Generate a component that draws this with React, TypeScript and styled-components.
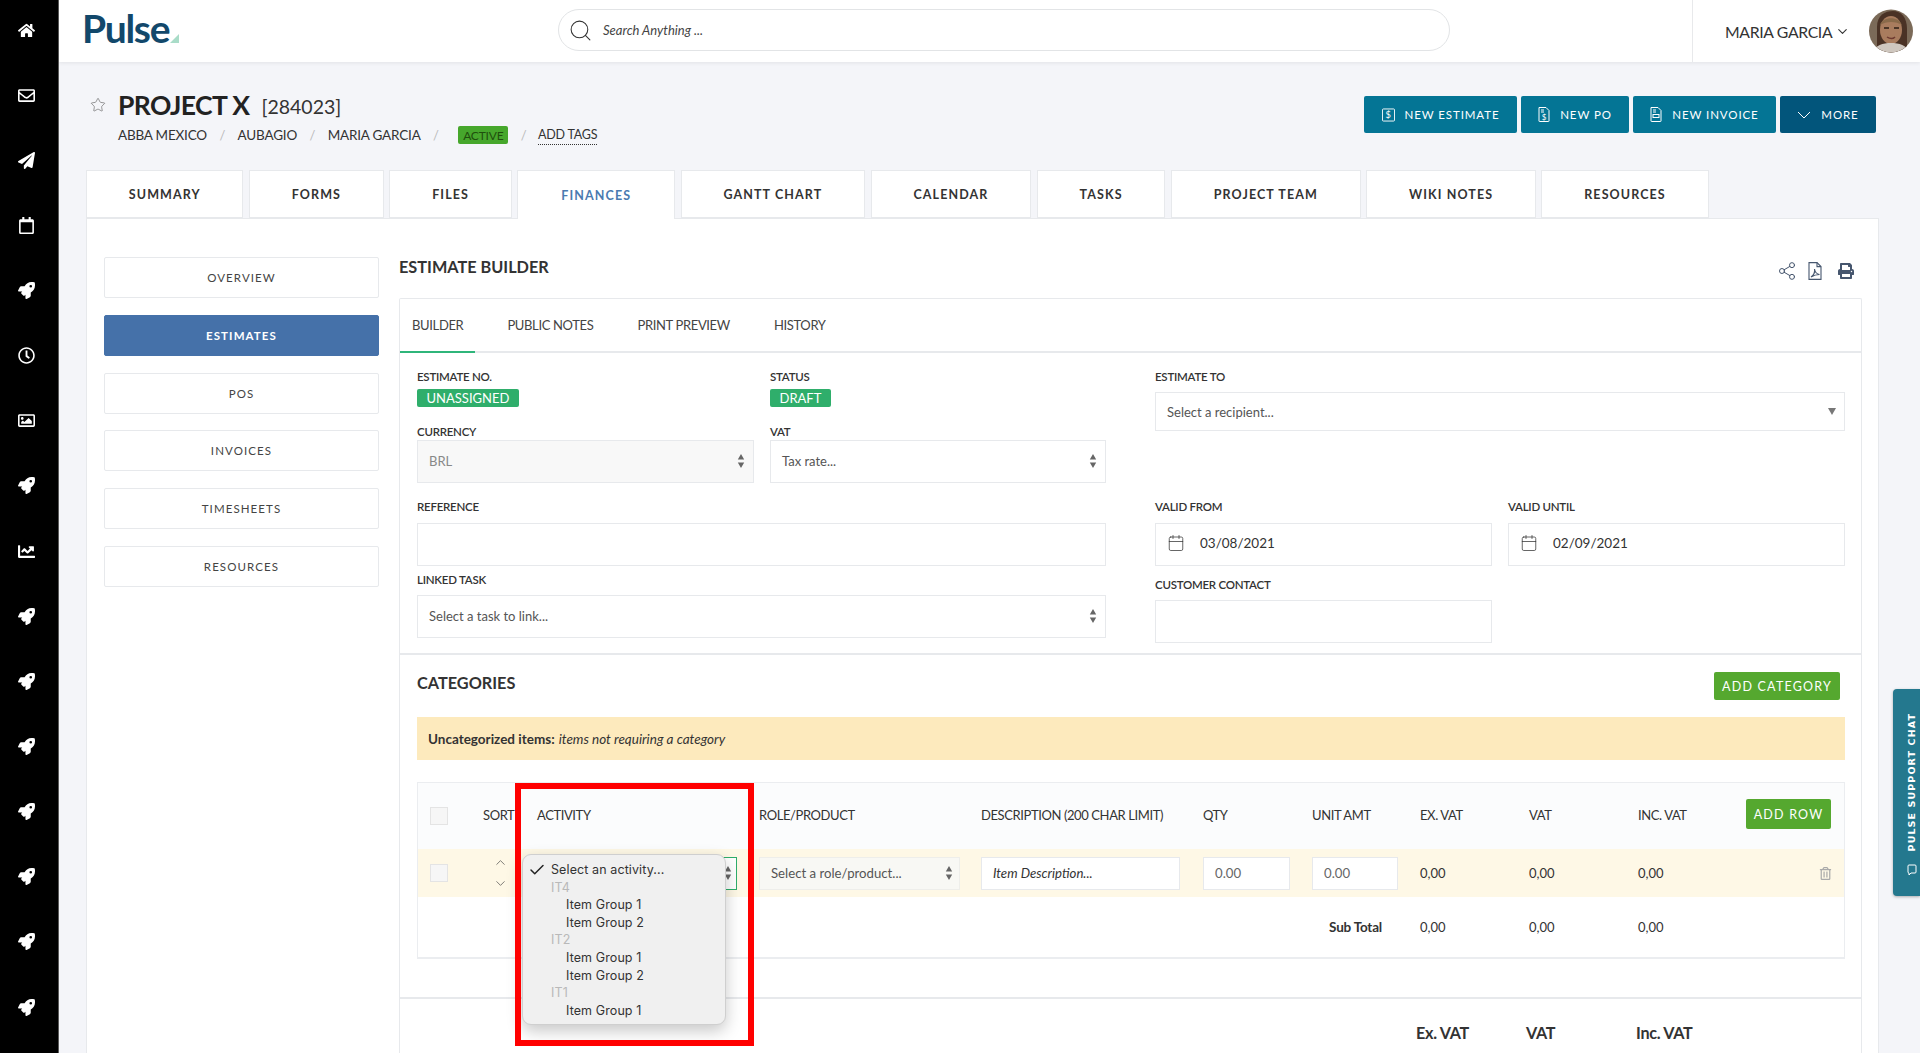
import React from "react";
import styled, { createGlobalStyle } from "styled-components";
import { ChevronDown, ChevronUp, Search, Star, Share2, Calendar, Check } from "lucide-react";
import { FaHome, FaRegEnvelope, FaPaperPlane, FaRegCalendar, FaRocket, FaRegClock, FaRegImage, FaChartLine, FaPrint, FaRegTrashAlt } from "react-icons/fa";

const Global = createGlobalStyle`
  html, body { margin: 0; padding: 0; background: #f4f5f9; }
  * { box-sizing: border-box; }
  body { font-family: Lato, "Liberation Sans", sans-serif; color: #333; }
`;

const GRID = "54px 54px 222px 222px 222px 109px 108px 109px 109px 108px 1fr";
const BORDER = "#e7e9ec";

const Shell = styled.div`
  position: relative;
  display: flex;
  width: 1920px;
  height: 1053px;
  overflow: hidden;
`;
const Sidebar = styled.nav`
  flex: 0 0 59px;
  background: #000;
  border-right: 1px solid #5a5a5a;
  padding-top: 22px;
  display: flex;
  flex-direction: column;
  align-items: center;
  gap: 49.15px;
  color: #fff;
`;
const SideIcon = styled.span`
  display: flex;
  align-items: center;
  justify-content: center;
  height: 16px;
  width: 18px;
  margin-right: 5px;
  font-size: 17px;
`;
const Main = styled.main`
  flex: 1;
  min-width: 0;
  display: flex;
  flex-direction: column;
`;
const Header = styled.header`
  flex: 0 0 62px;
  background: #fff;
  box-shadow: 0 1px 4px rgba(0, 0, 0, 0.08);
  display: flex;
  align-items: center;
  position: relative;
  padding-left: 24px;
`;
const Logo = styled.div`
  width: 100px;
  display: flex;
  align-items: flex-end;
  color: #12486b;
  font-size: 39px;
  font-weight: 700;
  letter-spacing: -1.3px;
  line-height: 46px;
  height: 46px;
  margin: -6px 0 0 -1px;
`;
const LogoMark = styled.svg`
  margin: 0 0 8px 1px;
`;
const SearchBox = styled.div`
  margin-left: 376px;
  width: 892px;
  height: 42px;
  border: 1px solid #e2e4e6;
  border-radius: 21px;
  display: flex;
  align-items: center;
  padding-left: 9px;
  gap: 10px;
  font-size: 13px;
  font-style: italic;
  color: #444;
  background: #fff;
  margin-top: -2px;
`;
const UserArea = styled.div`
  margin-left: auto;
  width: 228px;
  height: 62px;
  border-left: 1px solid #e8e9eb;
  display: flex;
  align-items: center;
  padding-left: 32px;
  font-size: 15.8px;
  color: #333;
  letter-spacing: -0.35px;
`;
const UserChevron = styled(ChevronDown)`
  margin-left: 3px;
`;
const Avatar = styled.svg`
  margin-left: 19px;
  flex: 0 0 44px;
`;
const Head = styled.section`
  flex: 0 0 108px;
  display: flex;
  justify-content: space-between;
  padding: 0 44px 0 31px;
`;
const TitleCol = styled.div`
  padding-top: 27px;
`;
const TitleRow = styled.div`
  display: flex;
  align-items: center;
  gap: 12px;
  height: 32px;
  color: #666;
`;
const Title = styled.h1`
  margin: 0;
  font-size: 26.5px;
  line-height: 32px;
  font-weight: 700;
  color: #222;
  letter-spacing: -0.6px;
`;
const Code = styled.span`
  font-size: 19.5px;
  color: #333;
  margin-top: 3px;
`;
const Crumbs = styled.div`
  display: flex;
  align-items: center;
  gap: 12.5px;
  height: 20px;
  margin: 4px 0 0 28px;
  font-size: 13.5px;
  letter-spacing: -0.2px;
  color: #333;
`;
const Slash = styled.span`
  color: #bbb;
  font-size: 13px;
`;
const Pill = styled.span<{ $bg: string }>`
  display: inline-flex;
  align-items: center;
  justify-content: center;
  background: ${(p) => p.$bg};
  border-radius: 2px;
  height: 18px;
  padding: 0 9.5px;
  font-size: 13px;
  color: #fff;
`;
const ActivePill = styled(Pill)`
  width: 50px;
  padding: 0;
  font-size: 12px;
  color: #1f4f0d;
  margin-left: 7px;
`;
const AddTags = styled.span`
  border-bottom: 1px dotted #333;
  padding-bottom: 2px;
  margin: 2px 0 0 -1px;
  font-size: 12.5px;
`;
const Actions = styled.div`
  display: flex;
  gap: 4px;
  padding-top: 34px;
`;
const ActionBtn = styled.button<{ $dark?: boolean; $w: number }>`
  width: ${(p) => p.$w}px;
  height: 37px;
  border: 0;
  border-radius: 2px;
  background: ${(p) => (p.$dark ? "#02557b" : "#047595")};
  color: #fff;
  font-family: inherit;
  font-size: 11.5px;
  letter-spacing: 0.9px;
  display: flex;
  align-items: center;
  justify-content: center;
  gap: 10px;
  padding: 0;
`;
const Tabs = styled.div`
  display: flex;
  gap: 5.5px;
  margin-left: 27px;
  height: 48px;
  position: relative;
  z-index: 1;
`;
const Tab = styled.div<{ $active?: boolean }>`
  height: ${(p) => (p.$active ? "49px" : "48px")};
  padding: 0 ${(p) => (p.$active ? 43 : 41.8)}px;
  background: #fff;
  border: 1px solid ${BORDER};
  border-bottom: ${(p) => (p.$active ? "0" : `1px solid ${BORDER}`)};
  display: flex;
  align-items: center;
  font-size: 12.5px;
  font-weight: 700;
  letter-spacing: 1.1px;
  color: ${(p) => (p.$active ? "#4a7ab0" : "#333")};
`;
const Panel = styled.div`
  flex: 1;
  margin: 0 41px 0 27px;
  background: #fff;
  border: 1px solid ${BORDER};
  border-bottom: 0;
  display: flex;
  padding-left: 17px;
  min-height: 0;
`;
const SideNav = styled.div`
  flex: 0 0 275px;
  padding-top: 38px;
  display: flex;
  flex-direction: column;
  gap: 16.8px;
`;
const NavBtn = styled.div<{ $active?: boolean }>`
  height: 41px;
  background: ${(p) => (p.$active ? "#4571a9" : "#fff")};
  border: 1.5px solid ${(p) => (p.$active ? "#4571a9" : BORDER)};
  border-radius: 2px;
  color: ${(p) => (p.$active ? "#fff" : "#444")};
  font-size: 11.5px;
  letter-spacing: 1.1px;
  display: flex;
  align-items: center;
  justify-content: center;
  font-weight: ${(p) => (p.$active ? 700 : 400)};
`;
const Work = styled.div`
  flex: 1;
  min-width: 0;
  margin: 0 16px 0 20px;
  display: flex;
  flex-direction: column;
`;
const WorkHead = styled.div`
  flex: 0 0 79px;
  padding-top: 38px;
  display: flex;
  justify-content: space-between;
`;
const H2 = styled.h2`
  margin: 0;
  font-size: 16.3px;
  line-height: 20px;
  font-weight: 700;
  color: #333;
`;
const CatTitle = styled(H2)`
  margin-top: -6px;
`;
const Tools = styled.div`
  display: flex;
  align-items: center;
  gap: 11px;
  color: #46566e;
  padding: 4px 8px 0 0;
  height: 24px;
`;
const PdfSvg = styled.svg`
  margin-right: 5px;
`;
const Card = styled.div`
  flex: 1;
  border: 1.5px solid ${BORDER};
  border-bottom: 0;
  border-radius: 2px 2px 0 0;
  min-height: 0;
`;
const CardTabs = styled.div`
  height: 54px;
  display: flex;
  gap: 20px;
  border-bottom: 2px solid ${BORDER};
`;
const CardTab = styled.div<{ $active?: boolean }>`
  padding: 0 12px;
  height: 54px;
  display: flex;
  align-items: center;
  font-size: 13px;
  letter-spacing: -0.35px;
  color: #444;
  border-bottom: 2px solid ${(p) => (p.$active ? "#2fb57a" : "transparent")};
`;
const Form = styled.div`
  height: 302px;
  padding: 17px 16px 0 17px;
  display: grid;
  grid-template-columns: 689px 690px;
  gap: 49px;
  border-bottom: 2px solid ${BORDER};
`;
const Col = styled.div`
  display: flex;
  flex-direction: column;
  align-items: stretch;
`;
const Two = styled.div`
  display: grid;
  grid-template-columns: 337px 336px;
  gap: 16px;
`;
const DateGrid = styled(Two)`
  grid-template-columns: 337px 337px;
`;
const Label = styled.label<{ $mt?: number; $mb?: number }>`
  display: block;
  height: 14px;
  line-height: 14px;
  font-size: 11.5px;
  font-weight: 600;
  color: #333;
  letter-spacing: -0.25px;
  margin-top: ${(p) => p.$mt ?? 0}px;
  margin-bottom: ${(p) => p.$mb ?? 0}px;
`;
const BadgeWrap = styled.div`
  display: flex;
  margin-top: 5px;
  height: 18px;
`;
const Field = styled.div<{ $h?: number; $disabled?: boolean }>`
  height: ${(p) => p.$h ?? 43}px;
  border: 1.5px solid ${BORDER};
  background: ${(p) => (p.$disabled ? "#f8f8f8" : "#fff")};
  display: flex;
  align-items: center;
  justify-content: space-between;
  padding: 0 8px 2px 11px;
  font-size: 13px;
  color: ${(p) => (p.$disabled ? "#888" : "#555")};
`;
const RecipientField = styled(Field)`
  padding-bottom: 0;
`;
const DateField = styled(Field)`
  justify-content: flex-start;
  gap: 15px;
  padding-bottom: 3px;
  color: #333;
  font-size: 13.5px;
`;
const ShortField = styled(Field)`
  width: 337px;
`;
const Categories = styled.div`
  padding: 17px 16px 38px 17px;
  border-bottom: 2px solid ${BORDER};
`;
const CatHead = styled.div`
  display: flex;
  justify-content: space-between;
  align-items: center;
  height: 28px;
  padding-right: 5px;
`;
const GreenBtn = styled.button<{ $w: number; $h: number }>`
  width: ${(p) => p.$w}px;
  height: ${(p) => p.$h}px;
  background: #55a82f;
  border: 0;
  border-radius: 2px;
  color: #fff;
  font-family: inherit;
  font-size: 12.5px;
  letter-spacing: 1.2px;
  padding: 0;
`;
const Banner = styled.div`
  margin-top: 17px;
  height: 43px;
  background: #fdeabd;
  display: flex;
  align-items: center;
  padding-left: 11px;
  font-size: 13.5px;
  color: #333;
  gap: 4px;
  b { font-weight: 700; }
  i { font-style: italic; }
`;
const Table = styled.div`
  margin-top: 22px;
  height: 177px;
  border: 1px solid #ebedf0;
  border-bottom-width: 2px;
`;
const Row = styled.div<{ $h: number; $bg: string }>`
  height: ${(p) => p.$h}px;
  background: ${(p) => p.$bg};
  display: grid;
  grid-template-columns: ${GRID};
  align-items: center;
  padding-left: 11px;
  font-size: 13px;
  color: #333;
`;
const Box = styled.span`
  display: block;
  width: 18px;
  height: 18px;
  margin-left: 1px;
  background: #f6f6f6;
  border: 1.5px solid #e4e4e4;
`;
const Sorter = styled.div`
  display: flex;
  flex-direction: column;
  align-items: center;
  width: 34px;
  color: #444;
  gap: 6px;
`;
const Cell = styled.div`
  font-size: 13px;
`;
const HeadCell = styled(Cell)`
  letter-spacing: -0.4px;
  color: #333;
  margin-top: -2px;
`;
const RowField = styled.div<{ $w: number; $tone: string; $line: string }>`
  width: ${(p) => p.$w}px;
  height: 33px;
  background: ${(p) => p.$tone};
  border: 1.5px solid ${(p) => p.$line};
  display: flex;
  align-items: center;
  justify-content: space-between;
  padding: 0 6px 0 11px;
  font-size: 13.2px;
  color: #555;
`;
const ActivityField = styled(RowField)`
  justify-content: flex-end;
  padding-right: 4px;
`;
const DescField = styled(RowField)`
  font-style: italic;
  color: #333;
`;
const NumField = styled(RowField)`
  color: #666;
`;
const TrashCell = styled.div`
  display: flex;
  justify-content: flex-end;
  padding-right: 12px;
  color: #aaa;
  font-size: 13px;
`;
const SubTotal = styled(Cell)`
  text-align: right;
  font-weight: 700;
  padding-right: 38px;
  letter-spacing: -0.2px;
  font-size: 13.5px;
`;
const BtnCell = styled.div`
  margin-top: -4px;
`;
const Totals = styled.div`
  display: grid;
  grid-template-columns: 110px 110px auto;
  padding: 24px 0 0 1016px;
  font-size: 16.2px;
  font-weight: 700;
  color: #333;
  letter-spacing: -0.3px;
`;
const RedFrame = styled.div`
  position: absolute;
  left: 515px;
  top: 783px;
  width: 239px;
  height: 263px;
  border: 6px solid #ff0000;
  pointer-events: none;
`;
const Popup = styled.ul`
  position: absolute;
  left: 522px;
  top: 854px;
  width: 204px;
  height: 171px;
  margin: 0;
  padding: 6px 0 0;
  list-style: none;
  background: #f0f0f0;
  border: 1px solid #cfcfcf;
  border-radius: 9px;
  box-shadow: 0 6px 16px rgba(0, 0, 0, 0.22);
  font-family: Inter, "Noto Sans", sans-serif;
  font-size: 12.5px;
  letter-spacing: 0.1px;
`;
const PopItem = styled.li<{ $kind: "item" | "group" | "first" }>`
  position: relative;
  height: 17.6px;
  line-height: 17.6px;
  padding-left: ${(p) => (p.$kind === "item" ? 43 : 28)}px;
  color: ${(p) => (p.$kind === "group" ? "#b9b9b9" : "#333")};
`;
const Tick = styled.span`
  position: absolute;
  left: 5px;
  top: 0;
  color: #222;
  display: flex;
`;
const Chat = styled.aside`
  position: absolute;
  right: 0;
  top: 689px;
  width: 27px;
  height: 207px;
  background: #24788e;
  border-radius: 4px 0 0 4px;
  box-shadow: 0 1px 3px rgba(0, 0, 0, 0.3);
  color: #fff;
  display: flex;
  align-items: center;
  justify-content: flex-end;
  flex-direction: column;
  padding: 0 0 20px 10px;
  gap: 13px;
`;
const ChatText = styled.span`
  writing-mode: vertical-rl;
  transform: rotate(180deg);
  font-family: "DejaVu Sans", sans-serif;
  font-weight: 700;
  font-size: 9.5px;
  letter-spacing: 1.1px;
  white-space: nowrap;
`;

const Arrows = () => (
  <svg width="8" height="14" viewBox="0 0 8 14"><path d="M4 0l3.200 5.500H.8zM4 14L.8 8.500h6.400z" fill="#666" /></svg>
);
const DocIcon = ({ kind }: { kind: "box" | "po" | "inv" }) =>
  kind === "box" ? (
    <svg width="13" height="14" viewBox="0 0 14 14" fill="none" stroke="#fff" strokeWidth="1"><rect x=".5" y=".5" width="13" height="13" rx="1" /><text x="7" y="10.500" fontSize="10" fill="#fff" stroke="none" textAnchor="middle" fontFamily="Lato">$</text></svg>
  ) : (
    <svg width="12" height="15" viewBox="0 0 12 15" fill="none" stroke="#fff" strokeWidth="1">
      <path d="M1 .5h7l3 3V14a.5.5 0 0 1-.5.5h-9A.5.5 0 0 1 1 14z" />
      <path d="M3 3h3M3 5h3" />
      {kind === "po" ? <text x="6.500" y="12.500" fontSize="8" fill="#fff" stroke="none" textAnchor="middle" fontFamily="Lato">$</text> : <rect x="3" y="7.500" width="6" height="3" />}
    </svg>
  );
const PdfIcon = () => (
  <PdfSvg width="14" height="18" viewBox="0 0 14 18" fill="none" stroke="#46566e" strokeWidth="1.1"><path d="M1 .6h8l4 4V17.400H1z" /><path d="M9 .6v4h4" /><path d="M3 15c3-2 4-5 3.500-8 .5 3 2 5 5 5.500-3 0-6 1-8.500 2.500z" /></PdfSvg>
);
const FaceAvatar = () => (
  <Avatar width="44" height="44" viewBox="0 0 44 44">
    <defs><clipPath id="av"><ellipse cx="22" cy="22" rx="22" ry="21.500" /></clipPath></defs>
    <g clipPath="url(#av)">
      <rect width="44" height="44" fill="#7b6a58" />
      <path d="M8 44V18C8 6 16 2 24 2s14 6 14 18v24z" fill="#4a3225" />
      <ellipse cx="22" cy="21" rx="11" ry="14" fill="#a97c5e" />
      <path d="M11 16c2-8 18-10 22 0-6-4-16-4-22 0z" fill="#8a6a4a" />
      <path d="M15 19h5M25 19h5" stroke="#2e1e16" strokeWidth="1.500" />
      <path d="M18 28c3 2 6 2 8 0" stroke="#6e3a30" strokeWidth="1.500" fill="none" />
      <path d="M4 44c2-8 10-10 18-10s16 2 18 10z" fill="#cfc7bf" />
    </g>
  </Avatar>
);

const sideIcons = [FaHome, FaRegEnvelope, FaPaperPlane, FaRegCalendar, FaRocket, FaRegClock, FaRegImage, FaRocket, FaChartLine, FaRocket, FaRocket, FaRocket, FaRocket, FaRocket, FaRocket, FaRocket];
const tabs = ["SUMMARY", "FORMS", "FILES", "FINANCES", "GANTT CHART", "CALENDAR", "TASKS", "PROJECT TEAM", "WIKI NOTES", "RESOURCES"];
const nav = ["OVERVIEW", "ESTIMATES", "POS", "INVOICES", "TIMESHEETS", "RESOURCES"];
const cardTabs = ["BUILDER", "PUBLIC NOTES", "PRINT PREVIEW", "HISTORY"];
const tableHead = ["SORT", "ACTIVITY", "ROLE/PRODUCT", "DESCRIPTION (200 CHAR LIMIT)", "QTY", "UNIT AMT", "EX. VAT", "VAT", "INC. VAT"];
const options: { t: string; k: "item" | "group" | "first" }[] = [
  { t: "Select an activity...", k: "first" },
  { t: "IT4", k: "group" },
  { t: "Item Group 1", k: "item" },
  { t: "Item Group 2", k: "item" },
  { t: "IT2", k: "group" },
  { t: "Item Group 1", k: "item" },
  { t: "Item Group 2", k: "item" },
  { t: "IT1", k: "group" },
  { t: "Item Group 1", k: "item" },
];

export default function App() {
  return (
    <Shell>
      <Global />
      <Sidebar>
        {sideIcons.map((I, i) => (
          <SideIcon key={i}><I /></SideIcon>
        ))}
      </Sidebar>
      <Main>
        <Header>
          <Logo>
            Pulse
            <LogoMark width="9" height="9" viewBox="0 0 9 9"><path d="M9 0v9H0z" fill="#a9dcc8" /></LogoMark>
          </Logo>
          <SearchBox>
            <Search size={25} strokeWidth={1} color="#333" />
            Search Anything ...
          </SearchBox>
          <UserArea>
            MARIA GARCIA
            <UserChevron size={15} strokeWidth={1.8} />
            <FaceAvatar />
          </UserArea>
        </Header>
        <Head>
          <TitleCol>
            <TitleRow>
              <Star size={16} strokeWidth={1} />
              <Title>PROJECT X</Title>
              <Code>[284023]</Code>
            </TitleRow>
            <Crumbs>
              <span>ABBA MEXICO</span><Slash>/</Slash>
              <span>AUBAGIO</span><Slash>/</Slash>
              <span>MARIA GARCIA</span><Slash>/</Slash>
              <ActivePill $bg="#46a72c">ACTIVE</ActivePill><Slash>/</Slash>
              <AddTags>ADD TAGS</AddTags>
            </Crumbs>
          </TitleCol>
          <Actions>
            <ActionBtn $w={153}><DocIcon kind="box" />NEW ESTIMATE</ActionBtn>
            <ActionBtn $w={108}><DocIcon kind="po" />NEW PO</ActionBtn>
            <ActionBtn $w={143}><DocIcon kind="inv" />NEW INVOICE</ActionBtn>
            <ActionBtn $w={96} $dark><svg width="14" height="8" viewBox="0 0 14 8" fill="none" stroke="#fff"><path d="M1 1l6 6 6-6" /></svg>MORE</ActionBtn>
          </Actions>
        </Head>
        <Tabs>
          {tabs.map((t) => (
            <Tab key={t} $active={t === "FINANCES"}>{t}</Tab>
          ))}
        </Tabs>
        <Panel>
          <SideNav>
            {nav.map((n) => (
              <NavBtn key={n} $active={n === "ESTIMATES"}>{n}</NavBtn>
            ))}
          </SideNav>
          <Work>
            <WorkHead>
              <H2>ESTIMATE BUILDER</H2>
              <Tools>
                <Share2 size={20} strokeWidth={1.2} />
                <PdfIcon />
                <FaPrint size={16} />
              </Tools>
            </WorkHead>
            <Card>
              <CardTabs>
                {cardTabs.map((c) => (
                  <CardTab key={c} $active={c === "BUILDER"}>{c}</CardTab>
                ))}
              </CardTabs>
              <Form>
                <Col>
                  <Two>
                    <div><Label>ESTIMATE NO.</Label><BadgeWrap><Pill $bg="#2fae6b">UNASSIGNED</Pill></BadgeWrap></div>
                    <div><Label>STATUS</Label><BadgeWrap><Pill $bg="#2fae6b">DRAFT</Pill></BadgeWrap></div>
                  </Two>
                  <Two>
                    <div><Label $mt={18} $mb={1}>CURRENCY</Label><Field $disabled>BRL<Arrows /></Field></div>
                    <div><Label $mt={18} $mb={1}>VAT</Label><Field>Tax rate...<Arrows /></Field></div>
                  </Two>
                  <Label $mt={17} $mb={9}>REFERENCE</Label>
                  <Field />
                  <Label $mt={7} $mb={8}>LINKED TASK</Label>
                  <Field>Select a task to link...<Arrows /></Field>
                </Col>
                <Col>
                  <Label $mb={8}>ESTIMATE TO</Label>
                  <RecipientField $h={39}>Select a recipient...<svg width="8" height="7" viewBox="0 0 8 7"><path d="M4 7L0 0h8z" fill="#777" /></svg></RecipientField>
                  <DateGrid>
                    <div><Label $mt={69} $mb={9}>VALID FROM</Label><DateField><Calendar size={18} strokeWidth={1} />03/08/2021</DateField></div>
                    <div><Label $mt={69} $mb={9}>VALID UNTIL</Label><DateField><Calendar size={18} strokeWidth={1} />02/09/2021</DateField></div>
                  </DateGrid>
                  <Label $mt={12} $mb={8}>CUSTOMER CONTACT</Label>
                  <ShortField />
                </Col>
              </Form>
              <Categories>
                <CatHead>
                  <CatTitle>CATEGORIES</CatTitle>
                  <GreenBtn $w={126} $h={28}>ADD CATEGORY</GreenBtn>
                </CatHead>
                <Banner><b>Uncategorized items:</b><i>items not requiring a category</i></Banner>
                <Table>
                  <Row $h={66} $bg="#fbfcfd">
                    <Box />
                    {tableHead.map((h) => (
                      <HeadCell key={h}>{h}</HeadCell>
                    ))}
                    <BtnCell><GreenBtn $w={85} $h={30}>ADD ROW</GreenBtn></BtnCell>
                  </Row>
                  <Row $h={48} $bg="#fef8e6">
                    <Box />
                    <Sorter><ChevronUp size={15} strokeWidth={1.1} /><ChevronDown size={15} strokeWidth={1.1} /></Sorter>
                    <ActivityField $w={200} $tone="#fff" $line="#2fae6b"><Arrows /></ActivityField>
                    <RowField $w={201} $tone="#f8f8f4" $line="#eeeeea">Select a role/product...<Arrows /></RowField>
                    <DescField $w={199} $tone="#fff" $line={BORDER}>Item Description...</DescField>
                    <NumField $w={87} $tone="#fff" $line={BORDER}>0.00</NumField>
                    <NumField $w={86} $tone="#fff" $line={BORDER}>0.00</NumField>
                    <Cell>0,00</Cell><Cell>0,00</Cell><Cell>0,00</Cell>
                    <TrashCell><FaRegTrashAlt /></TrashCell>
                  </Row>
                  <Row $h={60} $bg="#fff">
                    <span /><span /><span /><span /><span /><span />
                    <SubTotal>Sub Total</SubTotal>
                    <Cell>0,00</Cell><Cell>0,00</Cell><Cell>0,00</Cell>
                  </Row>
                </Table>
              </Categories>
              <Totals><span>Ex. VAT</span><span>VAT</span><span>Inc. VAT</span></Totals>
            </Card>
          </Work>
        </Panel>
      </Main>
      <Popup>
        {options.map((o, i) => (
          <PopItem key={i} $kind={o.k}>
            {o.k === "first" && <Tick><Check size={18} strokeWidth={2} /></Tick>}
            {o.t}
          </PopItem>
        ))}
      </Popup>
      <RedFrame />
      <Chat>
        <ChatText>PULSE SUPPORT CHAT</ChatText>
        <svg width="10" height="12" viewBox="0 0 10 12" fill="none" stroke="#fff"><path d="M2 1h6a1 1 0 0 1 1 1v6a1 1 0 0 1-1 1H4L2 11V9a1 1 0 0 1-1-1V2a1 1 0 0 1 1-1z" /></svg>
      </Chat>
    </Shell>
  );
}
